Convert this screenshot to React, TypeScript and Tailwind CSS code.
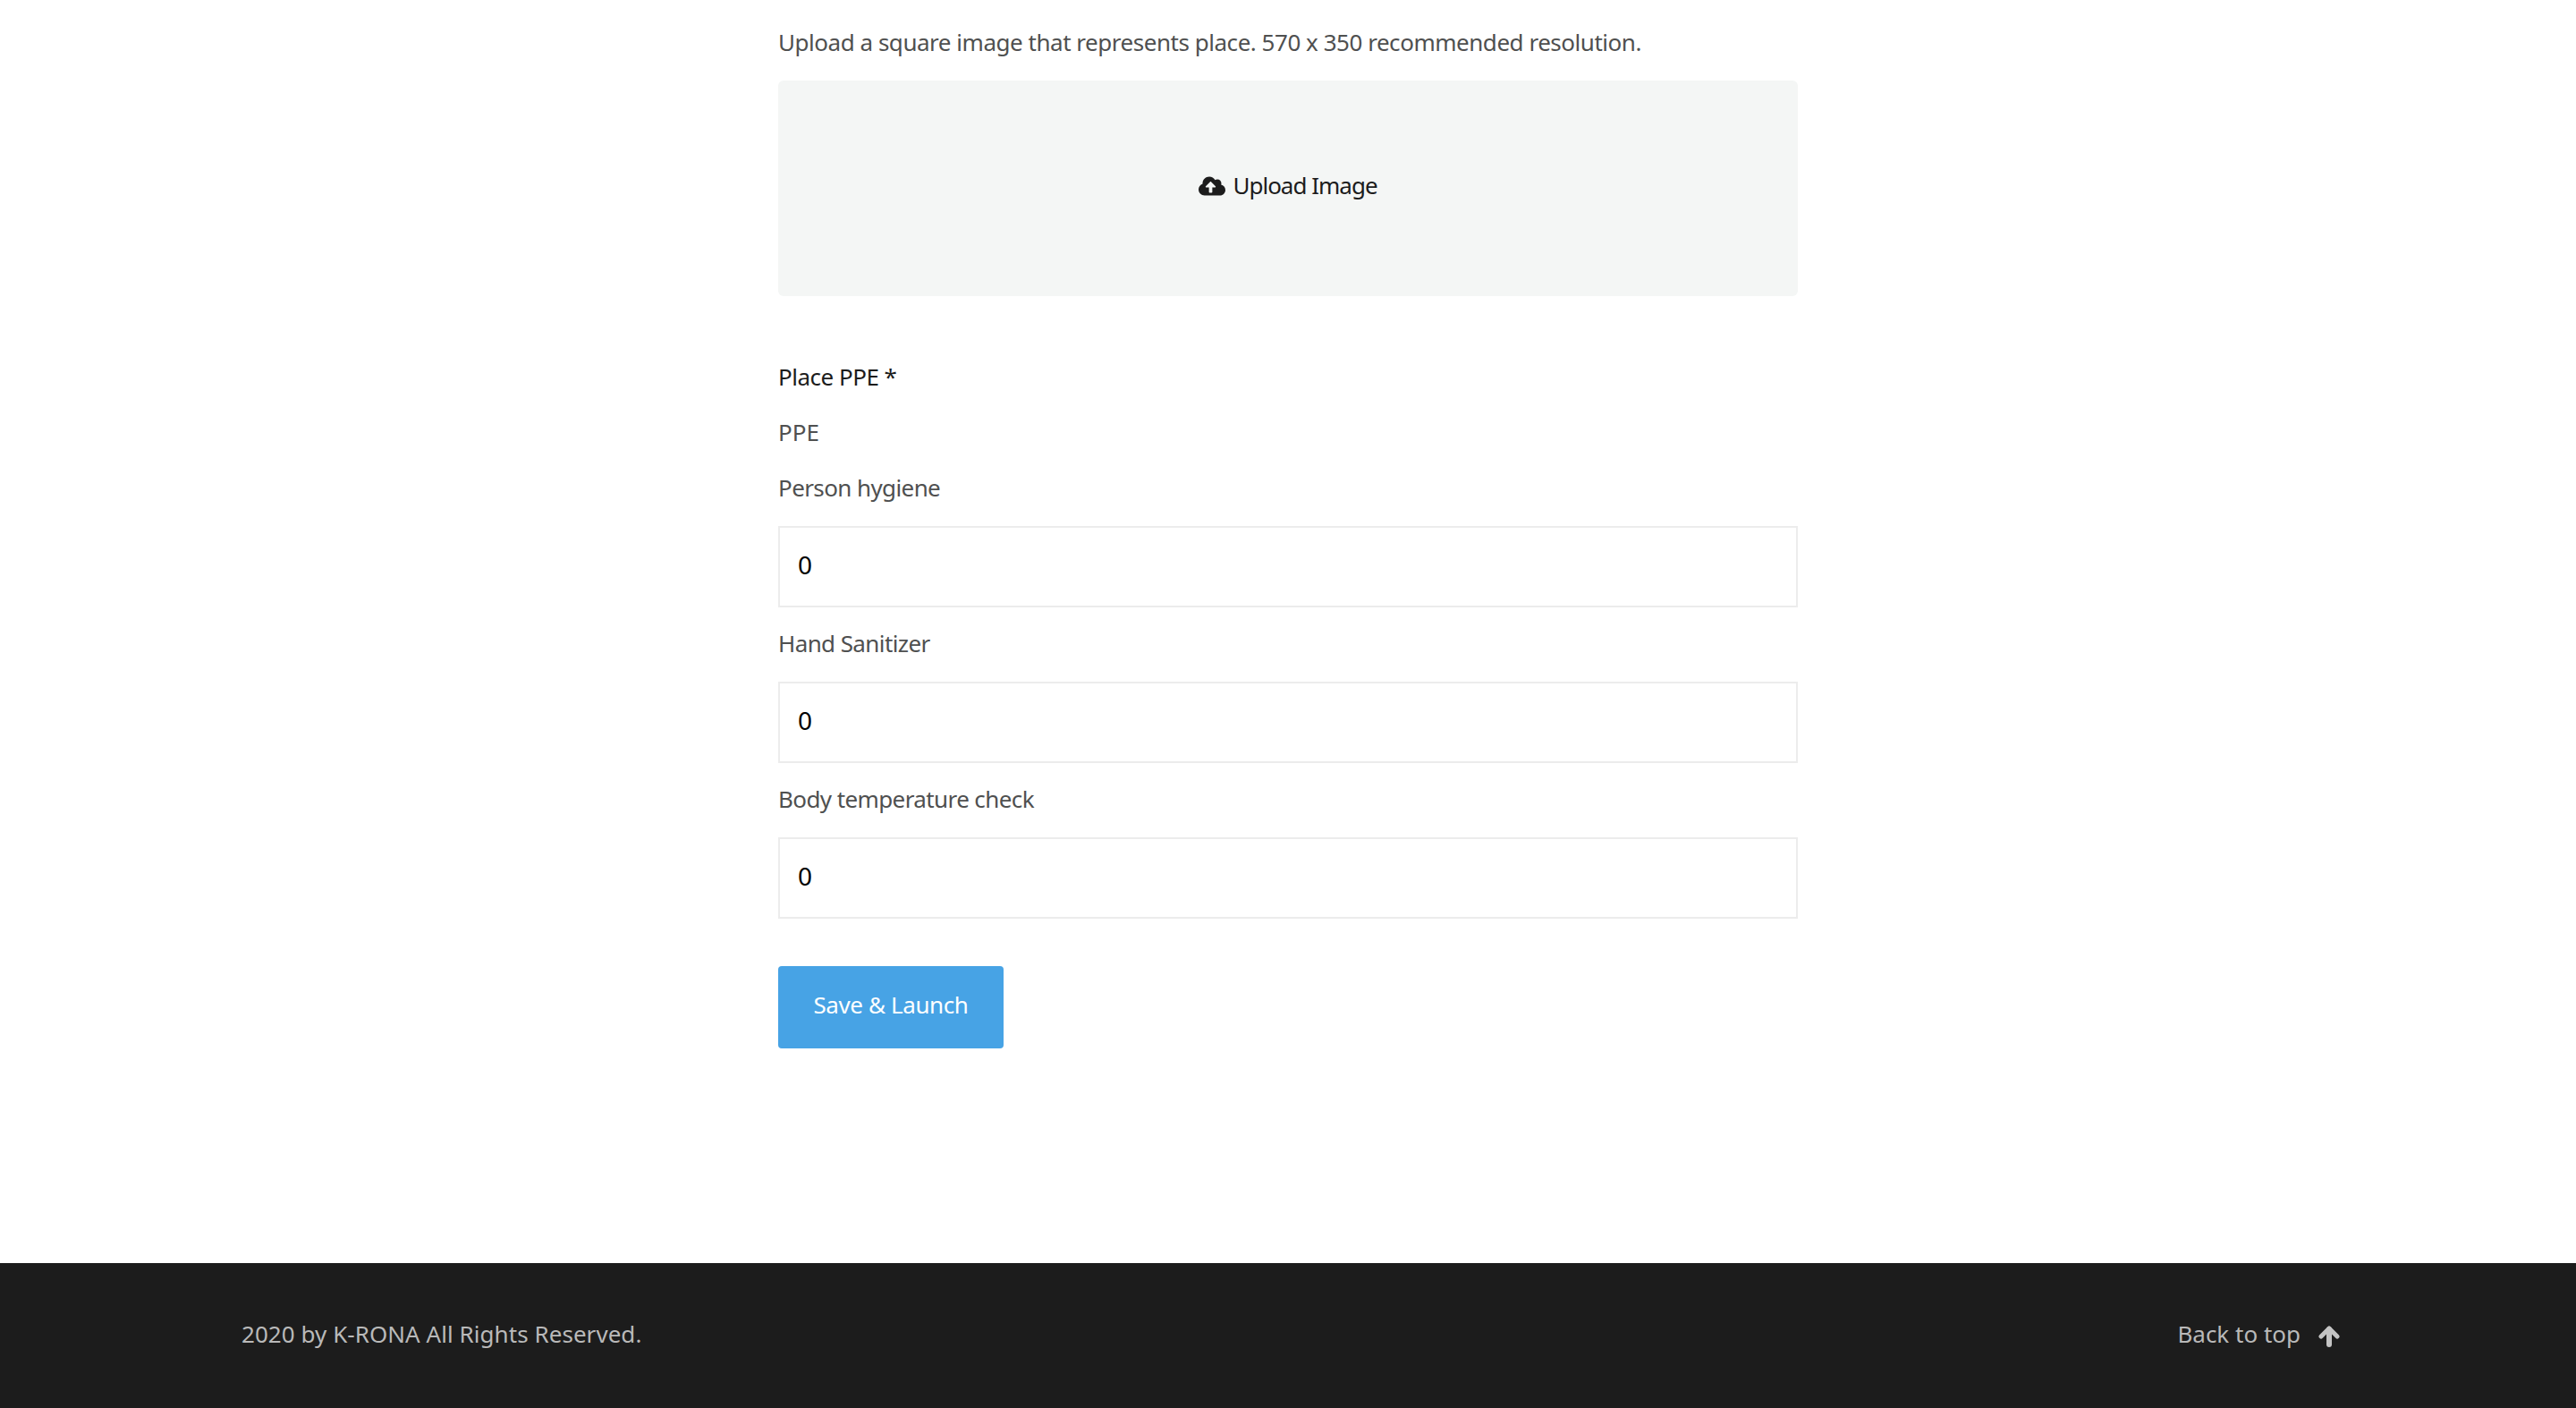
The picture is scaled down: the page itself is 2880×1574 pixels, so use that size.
import React from 'react';
import { FaCloudUploadAlt } from 'react-icons/fa';

const PPE_FIELDS = ['Person hygiene', 'Hand Sanitizer', 'Body temperature check'];

const App: React.FC = () => {
  return (
    <div className="min-h-screen flex flex-col bg-white font-['Noto_Sans',sans-serif] text-[26px] text-[#4f5050]">
      <main className="flex-1 w-[1140px] mx-auto pt-[28px]">
        <p className="leading-[38px] tracking-[-0.47px]">Upload a square image that represents place. 570 x 350 recommended resolution.</p>
        <div className="mt-[24px] h-[241px] rounded-[6px] bg-[#f4f6f5] flex items-center justify-center text-[#1c1c1c] gap-[8px] pb-[6px]">
          <FaCloudUploadAlt size={30} />
          <span className="tracking-[-1px]">Upload Image</span>
        </div>

        <h3 className="mt-[71px] leading-[38px] tracking-[-0.5px] text-[#1c1c1c]">Place PPE *</h3>
        <p className="mt-[24px] leading-[38px]">PPE</p>

        {PPE_FIELDS.map(label => (
          <div key={label} className="mt-[24px]">
            <label className="block leading-[38px] tracking-[-0.6px]">{label}</label>
            <input
              readOnly
              value="0"
              className="mt-[24px] mb-[-3px] block w-full h-[91px] border-2 border-[#ececec] bg-white px-[20px] pb-[6px] text-[28px] text-black outline-none"
            />
          </div>
        ))}

        <button className="mt-[56px] block w-[252px] h-[92px] rounded-[4px] bg-[#47a3e5] text-white pb-[6px] tracking-[-0.4px]">
          Save &amp; Launch
        </button>
      </main>

      <footer className="h-[162px] bg-[#1c1c1c] flex items-center justify-between pl-[270px] pr-[264px] pb-[4px] text-[#b9b9b9]">
        <span className="tracking-[0.05px]">2020 by K-RONA All Rights Reserved.</span>
        <a className="flex items-center gap-[20px]">
          Back to top
          <svg viewBox="0 0 24 24" width="24" height="24" className="mt-[6px] text-[#c4c4c4]" fill="none" stroke="currentColor" strokeLinecap="round" strokeLinejoin="round">
            <path d="M12 4 L12 21" strokeWidth="6" />
            <path d="M3 12 L12 3 L21 12" strokeWidth="5" />
          </svg>
        </a>
      </footer>
    </div>
  );
};

export default App;
